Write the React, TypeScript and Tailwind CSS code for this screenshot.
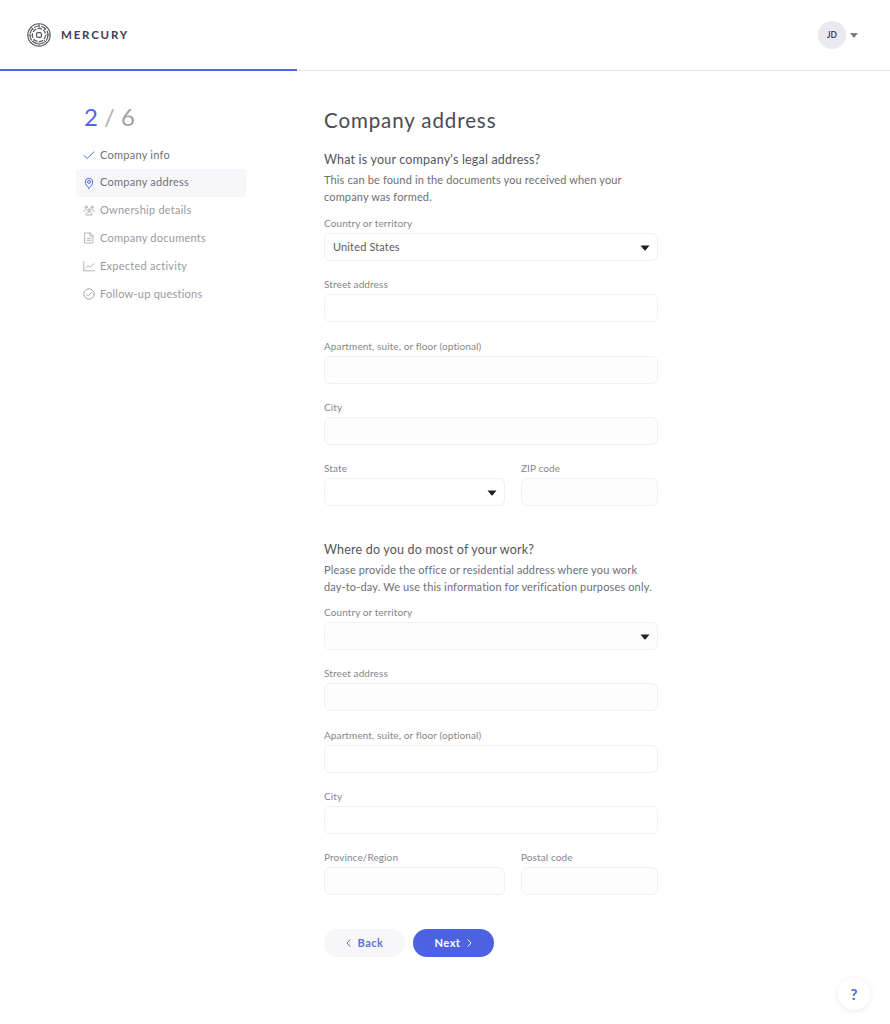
import React from "react";

const Chevron = () => (
  <svg width="10" height="6" viewBox="0 0 10 6" className="absolute right-[7px] top-[11px]">
    <path d="M0.5 0.5H9.5L5.6 5.2Q5 5.8 4.4 5.2Z" fill="#1f1f26" />
  </svg>
);

const Label = ({ children }: { children: React.ReactNode }) => (
  <div className="h-[18px] text-[10px] leading-[16px] tracking-[0.1px] text-[#85858f] whitespace-nowrap">{children}</div>
);

const Field = ({ label, value, select, tint }: { label: string; value?: string; select?: boolean; tint?: boolean }) => (
  <div className="flex flex-col">
    <Label>{label}</Label>
    <div className={`relative h-[28px] rounded-[6px] border border-[#f0f0f3] pl-[8px] text-[11px] leading-[25px] tracking-[0.14px] text-[#5a5a66] ${tint ? "bg-[#fdfdfe]" : "bg-white"}`}>
      {value}
      {select && <Chevron />}
    </div>
  </div>
);

const Logo = () => (
  <svg width="24" height="24" viewBox="0 0 24 24" fill="none" stroke="#55555c" strokeWidth="1">
    <circle cx="12" cy="12" r="11.2" strokeWidth="1.1" />
    <circle cx="12" cy="12" r="9" strokeWidth="1.2" strokeDasharray="6 1.4" />
    <circle cx="12" cy="12" r="6.6" strokeWidth="1.2" strokeDasharray="4.5 1.4" />
    <rect x="9.6" y="9.6" width="4.8" height="4.8" rx="1.4" strokeWidth="1.2" />
    <path d="M12 1v3.5M12 19.5V23M1 12h3.5M19.5 12H23M4.2 4.2l2.6 2.6M17.2 17.2l2.6 2.6M19.8 4.2l-2.6 2.6M6.8 17.2l-2.6 2.6" strokeWidth="0.9" />
  </svg>
);

const iconProps = { width: 12, height: 12, viewBox: "0 0 12 12", fill: "none", strokeWidth: 0.8, strokeLinecap: "round" as const, strokeLinejoin: "round" as const };

const steps: { label: string; color: string; icon: React.ReactNode; active?: boolean }[] = [
  {
    label: "Company info",
    color: "#70707a",
    icon: (
      <svg {...iconProps} stroke="#5f68d8" strokeWidth={1}>
        <path d="M1 6.5 4.2 9.5 11 2.8" />
      </svg>
    ),
  },
  {
    label: "Company address",
    color: "#70707a",
    active: true,
    icon: (
      <svg {...iconProps} stroke="#5266dc" strokeWidth={1}>
        <path d="M6 11.3C4 9.5 2.3 7.3 2.3 4.9a3.7 3.7 0 0 1 7.4 0C9.7 7.3 8 9.5 6 11.3Z" />
        <circle cx="6" cy="4.9" r="1.5" />
      </svg>
    ),
  },
  {
    label: "Ownership details",
    color: "#9a9aa3",
    icon: (
      <svg {...iconProps} stroke="#a2a2aa">
        <circle cx="3" cy="3.2" r="1.2" />
        <circle cx="9" cy="3.2" r="1.2" />
        <circle cx="6" cy="6" r="1.2" />
        <path d="M0.8 7.6c0-1.2 1-1.9 2.2-1.9M11.2 7.6c0-1.2-1-1.9-2.2-1.9M3 10.6c0-1.7 1.3-2.8 3-2.8s3 1.1 3 2.8Z" />
      </svg>
    ),
  },
  {
    label: "Company documents",
    color: "#9a9aa3",
    icon: (
      <svg {...iconProps} stroke="#a2a2aa">
        <path d="M2 1h5.2L10 3.8V11H2Z" />
        <path d="M7 1v3h3M4 6.3h4M4 8.3h4" />
      </svg>
    ),
  },
  {
    label: "Expected activity",
    color: "#9a9aa3",
    icon: (
      <svg {...iconProps} stroke="#a2a2aa">
        <path d="M0.8 1.5V10.8H11.5" />
        <path d="M2.5 8 5 5.5 6.8 7 10.8 3.8" />
      </svg>
    ),
  },
  {
    label: "Follow-up questions",
    color: "#9a9aa3",
    icon: (
      <svg {...iconProps} stroke="#8f8f98">
        <circle cx="6" cy="6" r="5.2" />
        <path d="M3.6 6.2 5.3 7.9 8.5 4.4" />
      </svg>
    ),
  },
];

export default function App() {
  return (
    <div className="min-h-[1024px] bg-white font-['Lato','Noto_Sans',sans-serif] antialiased relative">
      <header className="relative h-[71px] border-b border-[#e8e8ec] flex items-center justify-between pl-[27px] pr-[32px]">
        <div className="flex items-center gap-[10px]">
          <Logo />
          <span className="text-[11.5px] font-bold tracking-[1.8px] text-[#3d3d5c]">MERCURY</span>
        </div>
        <div className="flex items-center gap-[4px]">
          <div className="w-[28px] h-[28px] rounded-full bg-[#e9e9f0] flex items-center justify-center text-[8.5px] font-bold text-[#4a4a66]">JD</div>
          <svg width="8" height="5" viewBox="0 0 8 5">
            <path d="M0 0H8L4 5Z" fill="#7d7d86" />
          </svg>
        </div>
        <div className="absolute left-0 bottom-[-1px] h-[2px] w-[297px] bg-[#5266dc]" />
      </header>

      <div className="flex">
        <aside className="w-[324px] shrink-0 pl-[76px] pt-[30px]">
          <div className="pl-[8px] h-[32px] text-[24px] leading-[32px] text-[#a0a0a6] whitespace-pre">
            <span className="text-[#5266dc]">2</span> <span className="text-[#b0b0b6]">/</span> 6
          </div>
          <nav className="mt-[8px] w-[170px] flex flex-col">
            {steps.map((s) => (
              <div key={s.label} className={`h-[27.8px] flex items-center gap-[5px] pl-[7px] rounded-[3px] ${s.active ? "bg-[#f7f7fa]" : ""}`}>
                <span className="w-[12px] h-[12px] flex">{s.icon}</span>
                <span className="text-[11px] tracking-[0.25px] whitespace-nowrap" style={{ color: s.color }}>{s.label}</span>
              </div>
            ))}
          </nav>
        </aside>

        <main className="w-[334px] pt-[35px]">
          <h1 className="h-[28px] text-[20.5px] leading-[28px] tracking-[0.9px] text-[#4a4a52] font-normal">Company address</h1>

          <section className="mt-[16px]">
            <h2 className="h-[20px] text-[12.5px] leading-[20px] tracking-[0.19px] text-[#55555e] font-normal">What is your company's legal address?</h2>
            <p className="mt-[1px] text-[11px] leading-[17px] tracking-[0.14px] text-[#6e6e78]">
              This can be found in the documents you received when your<br />company was formed.
            </p>
            <div className="mt-[10px] flex flex-col gap-[15.25px]">
              <Field label="Country or territory" value="United States" select />
              <Field label="Street address" />
              <Field label="Apartment, suite, or floor (optional)" tint />
              <Field label="City" tint />
              <div className="grid grid-cols-[181px_137px] gap-x-[16px]">
                <Field label="State" select />
                <Field label="ZIP code" tint />
              </div>
            </div>
          </section>

          <section className="mt-[34px]">
            <h2 className="h-[20px] text-[12.5px] leading-[20px] tracking-[0.19px] text-[#55555e] font-normal">Where do you do most of your work?</h2>
            <p className="mt-[1px] text-[11px] leading-[17px] tracking-[0.14px] text-[#6e6e78] whitespace-nowrap">
              Please provide the office or residential address where you work<br />day-to-day. We use this information for verification purposes only.
            </p>
            <div className="mt-[9px] flex flex-col gap-[15.25px]">
              <Field label="Country or territory" select tint />
              <Field label="Street address" tint />
              <Field label="Apartment, suite, or floor (optional)" />
              <Field label="City" />
              <div className="grid grid-cols-[181px_137px] gap-x-[16px]">
                <Field label="Province/Region" tint />
                <Field label="Postal code" tint />
              </div>
            </div>
          </section>

          <div className="mt-[34px] flex gap-[8px]">
            <button className="w-[81px] h-[28px] rounded-full bg-[#f7f7fa] flex items-center justify-center gap-[7px] text-[11px] font-bold tracking-[0.5px] text-[#5f6fd8]">
              <svg width="5" height="8" viewBox="0 0 5 8" fill="none" stroke="#5f6fd8" strokeWidth="1"><path d="M4.3 0.5 1 4l3.3 3.5" /></svg>
              Back
            </button>
            <button className="w-[81px] h-[28px] rounded-full bg-[#4d62e2] flex items-center justify-center gap-[7px] text-[11px] font-bold tracking-[0.5px] text-white">
              Next
              <svg width="5" height="8" viewBox="0 0 5 8" fill="none" stroke="#ffffff" strokeWidth="1"><path d="M0.7 0.5 4 4 0.7 7.5" /></svg>
            </button>
          </div>
        </main>
      </div>

      <button className="absolute left-[838px] top-[978px] w-[32px] h-[32px] rounded-full bg-white shadow-[0_1px_6px_rgba(40,40,80,0.1)] flex items-center justify-center text-[15px] font-bold text-[#5266dc]">?</button>
    </div>
  );
}
